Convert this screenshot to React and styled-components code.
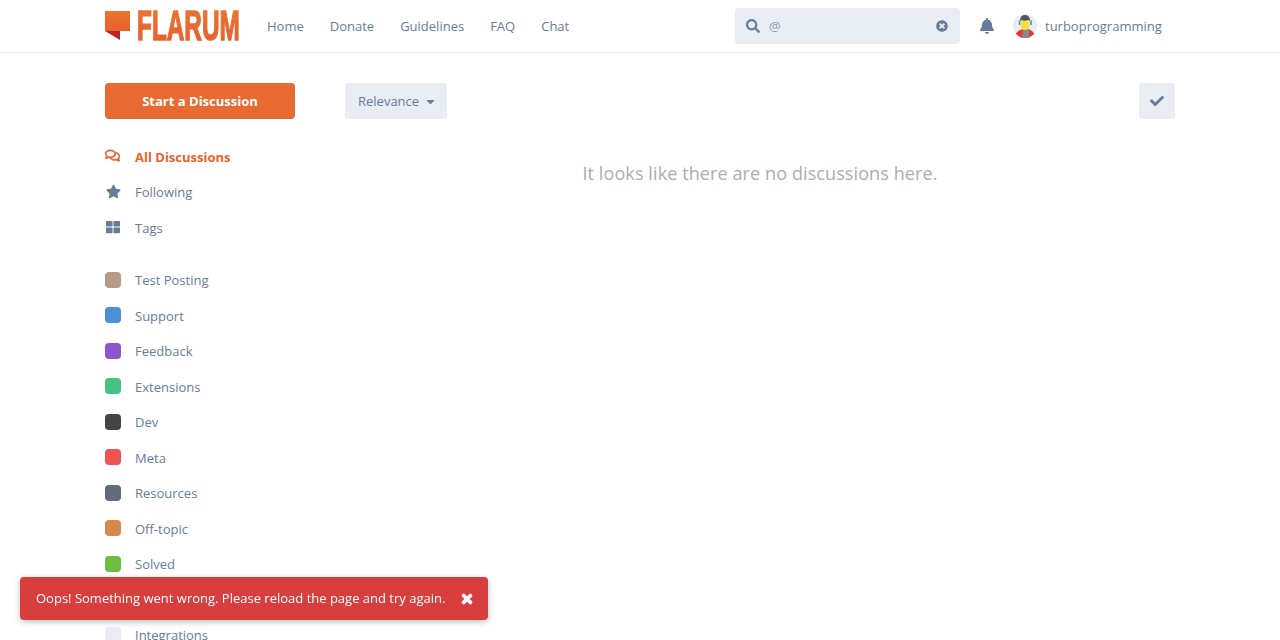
import React from "react";
import styled, { createGlobalStyle } from "styled-components";
import {
  FaBell,
  FaCaretDown,
  FaCheck,
  FaRegComments,
  FaSearch,
  FaStar,
  FaThLarge,
  FaTimes,
  FaTimesCircle,
} from "react-icons/fa";

const GlobalStyle = createGlobalStyle`
  html, body {
    margin: 0;
    height: 640px;
    overflow: hidden;
    background: #fff;
    color: #667d99;
    font-family: "Open Sans", "Liberation Sans", sans-serif;
    font-size: 13px;
    line-height: 1.5;
  }
  * { box-sizing: border-box; }
`;

const Header = styled.header`
  height: 53px;
  border-bottom: 1px solid #e8ecf3;
`;

const HeaderInner = styled.div`
  width: 1070px;
  height: 52px;
  margin-left: 105px;
  display: flex;
  align-items: center;
`;

const Logo = styled.div`
  width: 135px;
  flex-shrink: 0;
  display: flex;
  align-items: center;
  gap: 7px;
`;

const LogoFlag = styled.svg`
  flex-shrink: 0;
  display: block;
`;

const LogoText = styled.span`
  display: inline-block;
  flex-shrink: 0;
  font-family: "Liberation Sans", sans-serif;
  font-weight: 700;
  font-size: 42px;
  line-height: 36px;
  transform: scaleX(0.58);
  transform-origin: left center;
  -webkit-text-stroke: 1.5px transparent;
  background: linear-gradient(#ea7430, #e85f2e);
  -webkit-background-clip: text;
  background-clip: text;
  color: transparent;
`;

const NavLinks = styled.nav`
  margin-left: 27px;
  padding-top: 1px;
  display: flex;
  gap: 26px;
`;

const NavLink = styled.a`
  color: #667d99;
`;

const HeaderRight = styled.div`
  margin-left: auto;
  display: flex;
  align-items: center;
`;

const SearchBox = styled.div`
  width: 225px;
  height: 36px;
  background: #e8ecf3;
  border-radius: 4px;
  display: flex;
  align-items: center;
  padding: 0 12px 0 11px;
  color: #667d99;
  font-size: 14px;
`;

const SearchText = styled.span`
  margin-left: 9px;
  padding-top: 1px;
  font-size: 13px;
  color: #8a9cb3;
  flex: 1;
`;

const BellWrap = styled.span`
  margin-left: 19px;
  display: flex;
  font-size: 16px;
  color: #667d99;
`;

const UserWrap = styled.div`
  margin-left: 18px;
  width: 162px;
  display: flex;
  align-items: center;
  gap: 8px;
`;

const UserName = styled.span`
  padding-top: 1px;
`;

const Avatar = styled.svg`
  width: 24px;
  height: 24px;
  display: block;
  border-radius: 50%;
`;

const Page = styled.div`
  width: 1070px;
  margin: 30px 0 0 105px;
  display: flex;
`;

const Sidebar = styled.aside`
  width: 190px;
  flex-shrink: 0;
`;

const StartButton = styled.div`
  height: 36px;
  padding-top: 1px;
  background: #e76a33;
  border-radius: 4px;
  color: #fff;
  font-weight: 700;
  display: flex;
  align-items: center;
  justify-content: center;
`;

const SideList = styled.ul`
  list-style: none;
  margin: ${(p) => p.$top}px 0 0;
  padding: 0;
`;

const SideItem = styled.li`
  height: 35.5px;
  display: flex;
  align-items: center;
  color: ${(p) => (p.$active ? "#e7652e" : "#667d99")};
  font-weight: ${(p) => (p.$active ? 700 : 400)};
`;

const SideIcon = styled.span`
  width: 30px;
  height: 16px;
  display: flex;
  align-items: center;
  padding-left: ${(p) => p.$inset || 0}px;
  font-size: ${(p) => p.$size || 15}px;
  margin-top: -3px;
`;

const TagSquare = styled.span`
  width: 16px;
  height: 16px;
  border-radius: 4px;
  background: ${(p) => p.$color};
  margin-right: 14px;
  margin-top: -2px;
`;

const Main = styled.main`
  margin-left: 50px;
  flex: 1;
`;

const Toolbar = styled.div`
  display: flex;
  justify-content: space-between;
`;

const SortButton = styled.div`
  width: 102px;
  height: 36px;
  padding: 1px 0 0 13px;
  background: #e8ecf3;
  border-radius: 4px;
  display: flex;
  align-items: center;
  gap: 5px;
`;

const CheckButton = styled.div`
  width: 36px;
  height: 36px;
  background: #e8ecf3;
  border-radius: 4px;
  display: flex;
  align-items: center;
  justify-content: center;
  font-size: 14px;
`;

const EmptyText = styled.p`
  margin: 41px 0 0;
  text-align: center;
  font-size: 18px;
  line-height: 27px;
  letter-spacing: 0.1px;
  color: #adadad;
`;

const Alert = styled.div`
  position: fixed;
  left: 20px;
  bottom: 20px;
  width: 468px;
  height: 43px;
  background: #d83e3e;
  border-radius: 4px;
  box-shadow: 0 2px 6px rgba(0, 0, 0, 0.25);
  color: #fff;
  display: flex;
  align-items: center;
  padding-left: 16px;
`;

const AlertClose = styled.span`
  display: flex;
  margin-left: 15px;
  font-size: 14px;
`;

const links = ["Home", "Donate", "Guidelines", "FAQ", "Chat"];

const tags = [
  { name: "Test Posting", color: "#b59b88" },
  { name: "Support", color: "#4a90d2" },
  { name: "Feedback", color: "#8e55cc" },
  { name: "Extensions", color: "#48bf83" },
  { name: "Dev", color: "#444444" },
  { name: "Meta", color: "#ee5351" },
  { name: "Resources", color: "#626c7c" },
  { name: "Off-topic", color: "#d8884a" },
  { name: "Solved", color: "#6cbe3f" },
  { name: "", color: "#e8ecf3" },
  { name: "Integrations", color: "#e8ecf3" },
];

const FlagLogo = () => (
  <LogoFlag width="25" height="30" viewBox="0 0 25 30">
    <defs>
      <linearGradient id="flag" x1="0" y1="0" x2="0" y2="1">
        <stop offset="0" stopColor="#ea7430" />
        <stop offset="1" stopColor="#e85f2e" />
      </linearGradient>
    </defs>
    <polygon points="0,19 15,19 15,29 0,20" fill="#c4201d" />
    <polygon points="0,0 25,0 25,20 0,20" fill="url(#flag)" />
  </LogoFlag>
);

const UserAvatar = () => (
  <Avatar viewBox="0 0 24 24">
    <rect width="24" height="24" fill="#e8ecf3" />
    <path d="M2 24c0-5 3-8 8-9h5c4 1 7 4 7 9z" fill="#e13a34" />
    <rect x="9.5" y="15" width="6.5" height="9" fill="#8a8a8a" />
    <ellipse cx="12" cy="10.5" rx="4.5" ry="5.5" fill="#f5e03c" />
    <path d="M7 7c0-4 2-6 5-6s5 2 5 6l-2-1c-2 1-5 1-6 0z" fill="#55565c" />
    <path d="M6.5 11V6.5M18 11V6.5" stroke="#5a78d0" strokeWidth="1.5" />
  </Avatar>
);

export default function App() {
  return (
    <>
      <GlobalStyle />
      <Header>
        <HeaderInner>
          <Logo>
            <FlagLogo />
            <LogoText>FLARUM</LogoText>
          </Logo>
          <NavLinks>
            {links.map((l) => (
              <NavLink key={l}>{l}</NavLink>
            ))}
          </NavLinks>
          <HeaderRight>
            <SearchBox>
              <FaSearch />
              <SearchText>@</SearchText>
              <FaTimesCircle size={12} />
            </SearchBox>
            <BellWrap>
              <FaBell />
            </BellWrap>
            <UserWrap>
              <UserAvatar />
              <UserName>turboprogramming</UserName>
            </UserWrap>
          </HeaderRight>
        </HeaderInner>
      </Header>
      <Page>
        <Sidebar>
          <StartButton>Start a Discussion</StartButton>
          <SideList $top={20.5}>
            <SideItem $active>
              <SideIcon>
                <FaRegComments strokeWidth={20} />
              </SideIcon>
              All Discussions
            </SideItem>
            <SideItem>
              <SideIcon $inset={1}>
                <FaStar />
              </SideIcon>
              Following
            </SideItem>
            <SideItem>
              <SideIcon $inset={1} $size={14}>
                <FaThLarge />
              </SideIcon>
              Tags
            </SideItem>
          </SideList>
          <SideList $top={17}>
            {tags.map((t, i) => (
              <SideItem key={i}>
                <TagSquare $color={t.color} />
                {t.name}
              </SideItem>
            ))}
          </SideList>
        </Sidebar>
        <Main>
          <Toolbar>
            <SortButton>
              Relevance
              <FaCaretDown />
            </SortButton>
            <CheckButton>
              <FaCheck />
            </CheckButton>
          </Toolbar>
          <EmptyText>It looks like there are no discussions here.</EmptyText>
        </Main>
      </Page>
      <Alert>
        Oops! Something went wrong. Please reload the page and try again.
        <AlertClose>
          <FaTimes strokeWidth={40} />
        </AlertClose>
      </Alert>
    </>
  );
}
